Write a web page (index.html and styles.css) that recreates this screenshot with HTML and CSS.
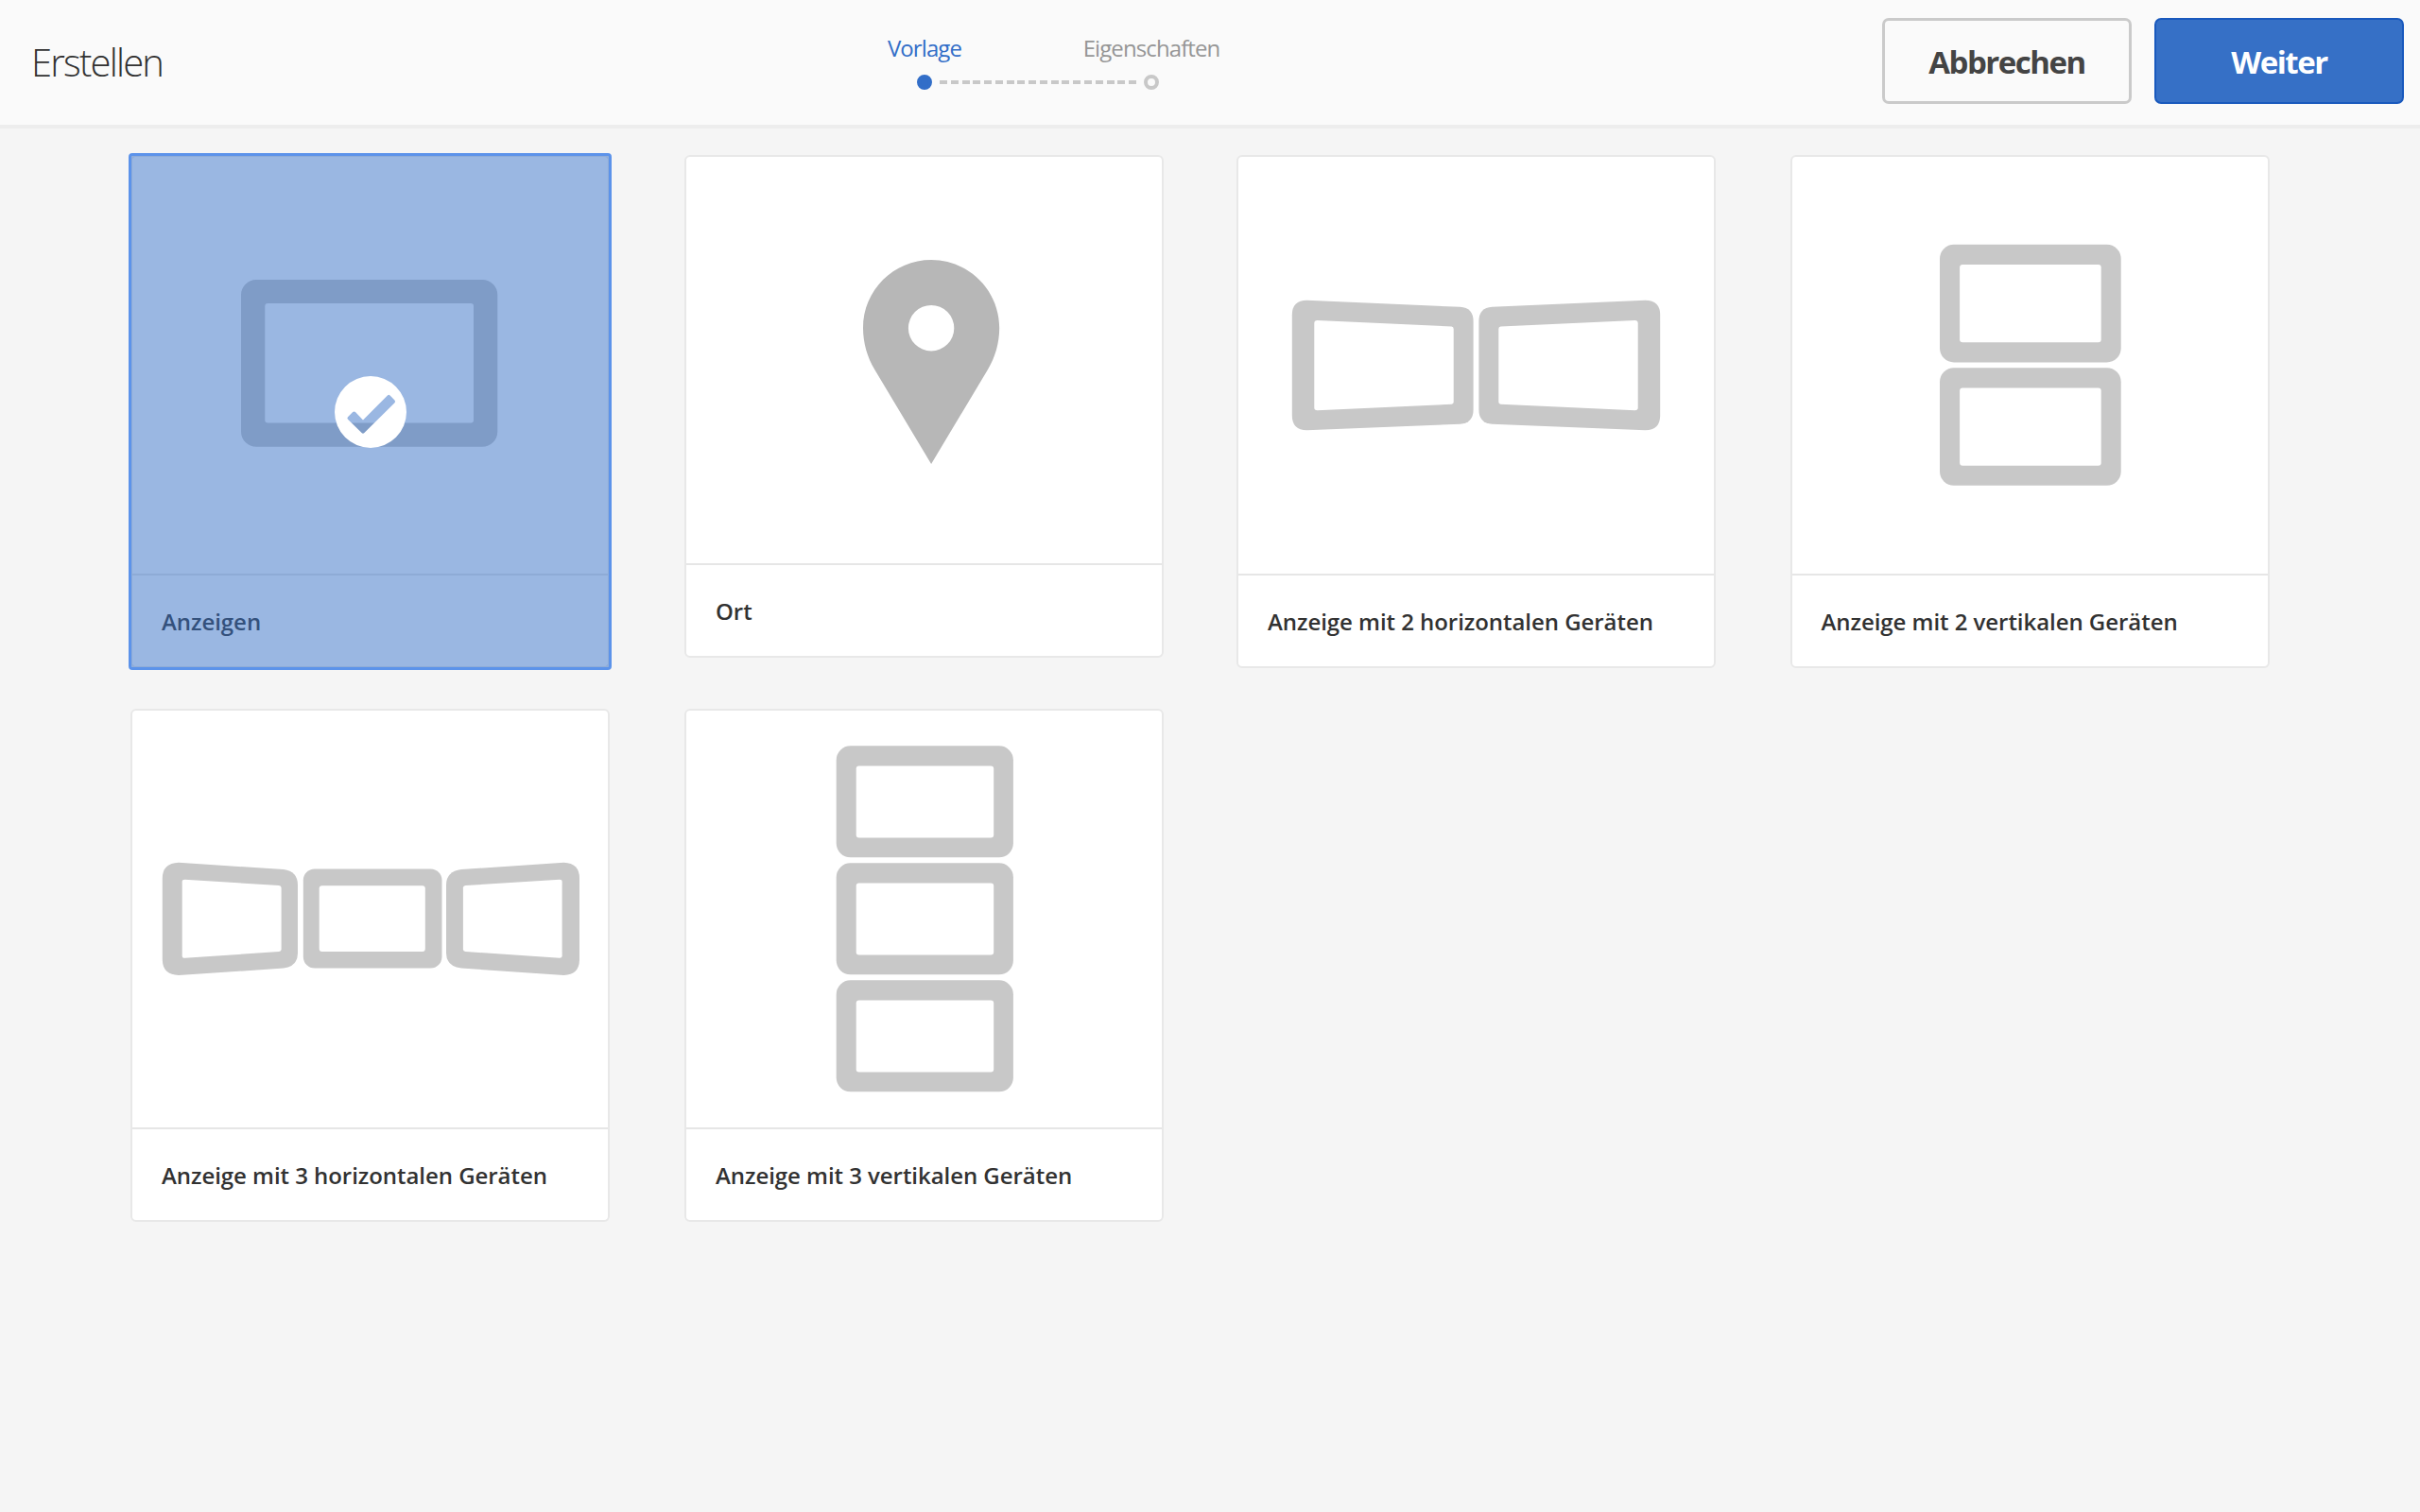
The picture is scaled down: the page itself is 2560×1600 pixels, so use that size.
FILE: index.html
```html
<!DOCTYPE html>
<html lang="de">
<head>
<meta charset="utf-8">
<title>Erstellen</title>
<link rel="stylesheet" href="styles.css">
</head>
<body>
<header class="header">
  <h1 class="title">Erstellen</h1>
  <div class="steps">
    <span class="step active">Vorlage</span>
    <span class="step">Eigenschaften</span>
    <div class="track"><i class="dot filled"></i><i class="line"></i><i class="dot"></i></div>
  </div>
  <div class="actions">
    <button class="button">Abbrechen</button>
    <button class="button primary">Weiter</button>
  </div>
</header>
<main class="cards">
  <article class="card selected">
    <svg class="thumb" viewBox="140 166 503 441">
      <path class="frame" fill-rule="evenodd" d="M271 296H510.300a16 16 0 0 1 16 16V456.800a16 16 0 0 1-16 16H271a16 16 0 0 1-16-16V312a16 16 0 0 1 16-16ZM283.300 321a3 3 0 0 0-3 3V444.600a3 3 0 0 0 3 3H498a3 3 0 0 0 3-3V324a3 3 0 0 0-3-3Z"/>
    </svg>
    <div class="name">Anzeigen</div>
    <div class="overlay">
      <svg class="check" viewBox="353.800 398 76 76">
        <path fill-rule="evenodd" d="M391.800 398a38 38 0 1 0 0 76a38 38 0 1 0 0-76ZM367.800 441.200L373 436Q374.500 434.800 376 436.200L383.800 444.400L409.700 418.600Q411 417.200 412.400 418.500L417.300 423.500Q418.500 425 417.300 426.200L385.200 458Q383.800 459.300 382.400 458L367.800 443.700Q366.500 442.400 367.800 441.200Z"/>
      </svg>
    </div>
  </article>
  <article class="card short">
    <svg class="thumb" viewBox="726 166 503 430">
      <path class="pin" fill-rule="evenodd" d="M985.100 275C945.300 275 913 307.300 913 347C913 363 917.500 378 925.200 391L985.100 491L1045 391C1052.700 378 1057.200 363 1057.200 347C1057.200 307.300 1024.900 275 985.100 275ZM985.100 323a24.200 24.200 0 1 1 0 48.400a24.200 24.200 0 1 1 0-48.400Z"/>
    </svg>
    <div class="name">Ort</div>
  </article>
  <article class="card">
    <svg class="thumb" viewBox="1310 166 503 441">
      <g id="wing">
        <path class="frame" d="M1382.500 317.800L1544.500 324.800Q1558.600 325.700 1558.600 340V433.500Q1558.600 447.700 1544.500 448.800L1382.500 455.300Q1366.800 455.300 1366.800 439.500V333.500Q1366.800 317.800 1382.500 317.800Z"/>
        <path class="hole" d="M1393.500 339L1535.500 345.500Q1537.700 345.700 1537.700 348V425.500Q1537.700 427.600 1535.500 427.700L1393.500 434.300Q1390.300 434.300 1390.300 431.500V342Q1390.300 339 1393.500 339Z"/>
      </g>
      <use href="#wing" transform="matrix(-1 0 0 1 3123 0)"/>
    </svg>
    <div class="name">Anzeige mit 2 horizontalen Geräten</div>
  </article>
  <article class="card">
    <svg class="thumb" viewBox="1895.500 166 503 441">
      <rect class="frame" x="2051.500" y="258.800" width="191.700" height="124.600" rx="15"/>
      <rect class="hole" x="2072.600" y="280" width="149.600" height="82.300" rx="3"/>
      <rect class="frame" x="2051.500" y="389.200" width="191.700" height="124.600" rx="15"/>
      <rect class="hole" x="2072.600" y="410.400" width="149.600" height="82.300" rx="3"/>
    </svg>
    <div class="name">Anzeige mit 2 vertikalen Geräten</div>
  </article>
  <article class="card">
    <svg class="thumb" viewBox="140 752 503 441">
      <path class="frame" d="M189 912.800L300 920Q315 922 315 936.500V1008.500Q315 1022.500 300 1024.600L189 1031.900Q171.800 1031.500 171.800 1015V929.500Q171.800 913.500 189 912.800Z"/>
      <path class="hole" d="M195.500 930.700L295 937Q297.600 937.300 297.600 939.500V1004.500Q297.600 1006.800 295 1007L195.500 1013.800Q192.700 1013.800 192.700 1011.500V933Q192.700 930.700 195.500 930.700Z"/>
      <rect class="frame" x="320.800" y="919.600" width="146.700" height="105" rx="12"/>
      <rect class="hole" x="337.700" y="937.200" width="112.100" height="69.800" rx="3"/>
      <path class="frame" d="M596.500 912.800L488 920Q472 922 472 936.500V1008.500Q472 1022.500 488 1024.600L596.500 1031.900Q613 1031.500 613 1015V929.500Q613 913.500 596.500 912.800Z"/>
      <path class="hole" d="M592 930.700L492.500 937Q489.900 937.300 489.900 939.500V1004.500Q489.900 1006.800 492.500 1007L592 1013.800Q594.600 1013.800 594.600 1011.500V933Q594.600 930.700 592 930.700Z"/>
    </svg>
    <div class="name">Anzeige mit 3 horizontalen Geräten</div>
  </article>
  <article class="card">
    <svg class="thumb" viewBox="726 752 503 441">
      <rect class="frame" x="884.700" y="789.300" width="187.200" height="118" rx="15"/>
      <rect class="hole" x="905.700" y="810.500" width="145.500" height="75.900" rx="3"/>
      <rect class="frame" x="884.700" y="913.300" width="187.200" height="118" rx="15"/>
      <rect class="hole" x="905.700" y="934.500" width="145.500" height="75.900" rx="3"/>
      <rect class="frame" x="884.700" y="1037.300" width="187.200" height="118" rx="15"/>
      <rect class="hole" x="905.700" y="1058.500" width="145.500" height="75.900" rx="3"/>
    </svg>
    <div class="name">Anzeige mit 3 vertikalen Geräten</div>
  </article>
</main>
</body>
</html>
```
FILE: styles.css
```css
* { box-sizing: border-box; }

body {
  margin: 0;
  min-height: 1600px;
  background: #f5f5f5;
  color: #323232;
  font-family: "Open Sans", "Noto Sans", sans-serif;
}

.header {
  display: grid;
  grid-template-columns: 858px 480px 1fr;
  height: 136px;
  background: #fafafa;
  border-bottom: 4px solid #ededed;
}

.title {
  align-self: center;
  margin: 0 0 2px 33px;
  font-size: 40px;
  font-weight: 300;
  letter-spacing: -1.8px;
}

.steps {
  display: grid;
  grid-template-columns: 240px 240px;
  grid-template-rows: 43px 16px;
  padding-top: 36px;
  text-align: center;
}

.step {
  color: #969696;
  font-size: 24px;
  line-height: 30px;
  letter-spacing: -0.9px;
}

.step.active { color: #326ec8; }

.track {
  grid-column: 1 / 3;
  display: flex;
  align-items: center;
  gap: 8px;
  padding: 0 112px;
}

.dot {
  width: 16px;
  height: 16px;
  border: 4px solid #c8c8c8;
  border-radius: 50%;
}

.dot.filled {
  border-color: #326ec8;
  background: #326ec8;
}

.line {
  flex: 1;
  height: 4px;
  background: repeating-linear-gradient(90deg, #c8c8c8 0 8px, transparent 8px 11.77px);
}

.actions {
  display: flex;
  justify-content: flex-end;
  gap: 24px;
  padding: 19px 17px 0 0;
}

.button {
  width: 264px;
  height: 91px;
  padding: 1px 0 0;
  border: 3px solid #cacaca;
  border-radius: 7px;
  background: #fafafa;
  color: #444;
  font: 700 33px "Open Sans", sans-serif;
  letter-spacing: -1.5px;
}

.button.primary {
  border: 2px solid #1959bd;
  background: #3670c6;
  color: #fff;
}

.cards {
  display: grid;
  grid-template-columns: 586px 584px 585.5px 507px;
  row-gap: 43px;
  align-items: start;
  padding: 28px 0 0 138px;
}

.card {
  position: relative;
  width: 507px;
  border: 2px solid #e8e8e8;
  border-radius: 6px;
  background: #fff;
}

.thumb {
  display: block;
  width: 503px;
  height: 441px;
}

.short .thumb { height: 430px; }

.name {
  height: 98px;
  padding-left: 31px;
  border-top: 2px solid #e6e6e6;
  font-size: 24px;
  font-weight: 600;
  line-height: 97px;
  letter-spacing: -0.05px;
}

.frame { fill: #c8c8c8; }
.hole { fill: #fff; }
.pin { fill: #b7b7b7; }

.overlay {
  position: absolute;
  inset: -4px;
  border: 3px solid #5c93ea;
  border-radius: 4px;
  background: rgba(54, 112, 198, 0.5);
}

/* Selection mark, centred on the whole card */
.check {
  position: absolute;
  top: calc(50% - 38px);
  left: calc(50% - 37.5px);
  width: 76px;
  height: 76px;
  fill: #fff;
}
```
